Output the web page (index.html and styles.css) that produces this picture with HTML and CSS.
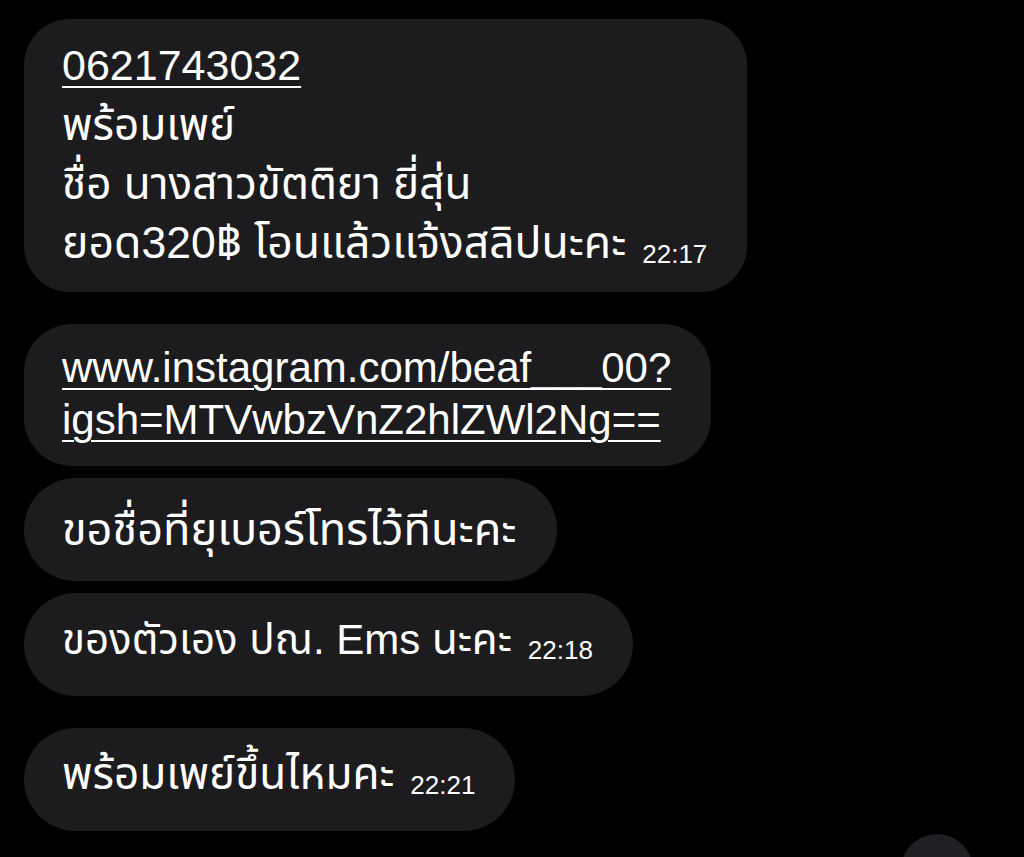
FILE: index.html
```html
<!DOCTYPE html>
<html lang="th">
<head>
<meta charset="utf-8">
<title>Chat</title>
<link rel="stylesheet" href="styles.css">
</head>
<body>
<main class="chat">
  <div class="bubble bubble-multi first">
    <p class="line num"><span class="link">0621743032</span></p>
    <p class="line">พร้อมเพย์</p>
    <p class="line">ชื่อ นางสาวขัตติยา ยี่สุ่น</p>
    <p class="line wide">ยอด320฿ โอนแล้วแจ้งสลิปนะคะ<span class="time">22:17</span></p>
  </div>
  <div class="bubble bubble-multi link-bubble group-start">
    <p class="line"><span class="link">www.instagram.com/beaf___00?</span></p>
    <p class="line"><span class="link">igsh=MTVwbzVnZ2hlZWl2Ng==</span></p>
  </div>
  <div class="bubble single">
    <p class="line wider">ขอชื่อที่ยุเบอร์โทรไว้ทีนะคะ</p>
  </div>
  <div class="bubble single">
    <p class="line mixed">ของตัวเอง ปณ. Ems นะคะ<span class="time">22:18</span></p>
  </div>
  <div class="bubble single group-start">
    <p class="line">พร้อมเพย์ขึ้นไหมคะ<span class="time">22:21</span></p>
  </div>
</main>
<div class="fab" aria-hidden="true"></div>
</body>
</html>
```
FILE: styles.css
```css
html, body {
  margin: 0;
  padding: 0;
  background: #000;
  width: 1024px;
  height: 857px;
  overflow: hidden;
}
body {
  position: relative;
  font-family: "Liberation Sans", "Noto Sans Thai", "Noto Sans Thai Looped", "Noto Sans", sans-serif;
  color: #fff;
}
.chat {
  display: flex;
  flex-direction: column;
  align-items: flex-start;
  padding: 19px 0 0 24px;
  gap: 12px;
}
.bubble {
  background: #1c1c1e;
  border-radius: 50px;
  padding: 0 40px 0 38px;
  box-sizing: border-box;
}
.group-start {
  margin-top: 20px;
}
.line {
  margin: 0;
  font-size: 44px;
  line-height: 59px;
  white-space: nowrap;
}
.line.num {
  font-size: 43px;
}
.line.wide {
  font-size: 44.5px;
}
.line.wider {
  font-size: 45px;
}
.line.mixed {
  font-size: 42px;
}
.first {
  padding-top: 17px;
  padding-bottom: 8px;
  border-radius: 46px;
}
.link-bubble {
  padding-top: 18px;
  padding-bottom: 20px;
  border-radius: 48px;
}
.link-bubble .line {
  font-size: 42px;
  line-height: 52px;
}
.single {
  height: 103px;
  display: flex;
  align-items: center;
  border-radius: 52px;
}
.link {
  text-decoration: underline;
  text-decoration-thickness: 2px;
  text-underline-offset: 6px;
}
.time {
  font-size: 26px;
  margin-left: 16px;
  vertical-align: -5px;
}
.fab {
  position: absolute;
  left: 901px;
  top: 834px;
  width: 72px;
  height: 72px;
  border-radius: 50%;
  background: #1f2023;
}
```
